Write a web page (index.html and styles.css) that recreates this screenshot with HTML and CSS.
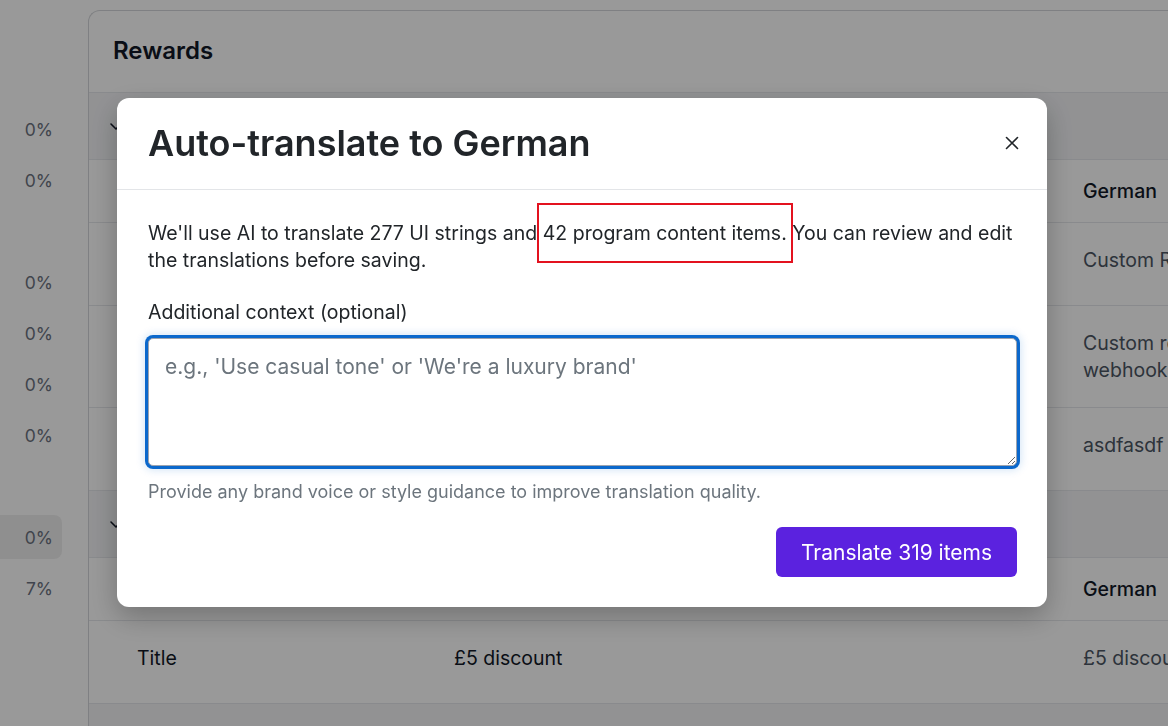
FILE: index.html
```html
<!DOCTYPE html>
<html lang="en">

<head>
    <meta charset="utf-8">
    <meta content="width=device-width, initial-scale=1.0" name="viewport">
    <title>Translations</title>
    <link rel="stylesheet" href="styles.css">
</head>

<body>

    <div class="page">
        <!-- Language progress list -->
        <aside class="langs">
            <div class="lang">0%</div>
            <div class="lang">0%</div>
            <div class="lang"></div>
            <div class="lang">0%</div>
            <div class="lang">0%</div>
            <div class="lang">0%</div>
            <div class="lang">0%</div>
            <div class="lang"></div>
            <div class="lang active">0%</div>
            <div class="lang">7%</div>
        </aside>

        <main class="content">
            <div class="card">
                <div class="card-head">
                    <h2>Rewards</h2>
                </div>

                <div class="section-head">
                    <svg class="chevron" viewBox="0 0 16 16" width="16" height="16">
                        <path d="M3 6l5 5 5-5" fill="none" stroke="#111827" stroke-width="1.6" stroke-linecap="round" stroke-linejoin="round" />
                    </svg>
                    <span>Custom reward</span>
                </div>
                <div class="row row-head">
                    <div>Field</div>
                    <div>English</div>
                    <div>German</div>
                </div>
                <div class="row">
                    <div>Name</div>
                    <div>Custom Reward</div>
                    <div class="muted">Custom Reward</div>
                </div>
                <div class="row tall">
                    <div>Description</div>
                    <div>Custom reward via webhook</div>
                    <div class="muted">Custom reward via webhook</div>
                </div>
                <div class="row">
                    <div>Terms</div>
                    <div>asdfasdf</div>
                    <div class="muted">asdfasdf</div>
                </div>

                <div class="section-head">
                    <svg class="chevron" viewBox="0 0 16 16" width="16" height="16">
                        <path d="M3 6l5 5 5-5" fill="none" stroke="#111827" stroke-width="1.6" stroke-linecap="round" stroke-linejoin="round" />
                    </svg>
                    <span>£5 discount</span>
                </div>
                <div class="row row-head">
                    <div>Field</div>
                    <div>English</div>
                    <div>German</div>
                </div>
                <div class="row">
                    <div>Title</div>
                    <div>£5 discount</div>
                    <div class="muted">£5 discount</div>
                </div>

                <div class="section-head"></div>
            </div>
        </main>
    </div>

    <!-- Auto-translate dialog -->
    <div class="overlay">
        <div class="modal">
            <div class="modal-head">
                <h1>Auto-translate to German</h1>
                <button class="close" aria-label="Close">
                    <svg viewBox="0 0 14 14" width="14" height="14">
                        <path d="M1.5 1.5l11 11M12.5 1.5l-11 11" stroke="#212529" stroke-width="1.6" stroke-linecap="round" />
                    </svg>
                </button>
            </div>
            <div class="modal-body">
                <p>We'll use AI to translate 277 UI strings and <span class="mark">42 program content items.</span> You can review and edit the translations before saving.</p>
                <label for="context">Additional context (optional)</label>
                <textarea id="context" placeholder="e.g., 'Use casual tone' or 'We're a luxury brand'"></textarea>
                <div class="hint">Provide any brand voice or style guidance to improve translation quality.</div>
                <div class="actions">
                    <button class="primary">Translate 319 items</button>
                </div>
            </div>
        </div>
    </div>

</body>

</html>
```

FILE: styles.css
```css
body {
    font-family: Inter, "Noto Sans", sans-serif;
    margin: 0;
    padding: 0;
    background: #fff;
    color: #111827;
    overflow: hidden;
    height: 726px;
}

.page {
    display: flex;
}

/* left column with translation progress */
.langs {
    width: 88px;
    flex-shrink: 0;
    padding-top: 107px;
}

.lang {
    width: 62px;
    height: 44px;
    margin-bottom: 7px;
    box-sizing: border-box;
    padding-right: 9px;
    display: flex;
    align-items: center;
    justify-content: flex-end;
    font-size: 17.5px;
    color: #6b7280;
    border-radius: 0 8px 8px 0;
}

.lang.active {
    background: #efefef;
}

.content {
    flex: 1;
    padding-top: 10px;
    min-width: 0;
}

.card {
    border: 1px solid #d4d6da;
    border-right: none;
    border-radius: 12px 0 0 0;
    background: #fff;
}

.card-head {
    height: 81px;
    display: flex;
    align-items: center;
    padding-left: 24px;
    border-bottom: 1px solid #e5e7eb;
}

.card-head h2 {
    margin: 0 0 2px;
    font-size: 24px;
    font-weight: 600;
}

.section-head {
    height: 66px;
    display: flex;
    align-items: center;
    gap: 10px;
    padding-left: 19px;
    background: #f3f4f6;
    font-size: 19.5px;
    font-weight: 600;
}

.row {
    display: grid;
    grid-template-columns: 317px 629px 230px;
    align-items: start;
    height: 83px;
    box-sizing: border-box;
    padding: 24px 0 0 48px;
    border-bottom: 1px solid #e5e7eb;
    font-size: 19.5px;
    line-height: 27px;
}

.row-head {
    height: 64px;
    padding-top: 0;
    align-items: center;
    font-weight: 500;
    border-top: 1px solid #e5e7eb;
}

.row.tall {
    height: 102px;
}

.muted {
    color: #4b5563;
}

.overlay {
    position: fixed;
    top: 0;
    left: 0;
    width: 100%;
    height: 100%;
    background-color: rgba(0, 0, 0, 0.4);
    display: flex;
    justify-content: center;
    align-items: flex-start;
    padding: 98px 4px 0 0;
    box-sizing: border-box;
}

.modal {
    width: 930px;
    background: #fff;
    border-radius: 12px;
    box-shadow: 0 10px 28px rgba(0, 0, 0, 0.25);
    color: #212529;
}

.modal-head {
    height: 92px;
    box-sizing: border-box;
    display: flex;
    align-items: center;
    justify-content: space-between;
    padding: 0 24px 2px 31px;
    border-bottom: 1px solid #e3e5e8;
}

.modal-head h1 {
    margin: 0;
    font-size: 36px;
    font-weight: 600;
}

.close {
    border: none;
    background: none;
    padding: 4px;
    display: flex;
}

.modal-body {
    padding: 30px 30px 30px 31px;
    display: flex;
    flex-direction: column;
}

.modal-body p {
    margin: 0 0 25px;
    font-size: 19.5px;
    line-height: 27px;
}

.mark {
    position: relative;
}

.mark::after {
    content: "";
    position: absolute;
    left: -6px;
    right: -6px;
    top: -18px;
    bottom: -18px;
    border: 2px solid #e3121f;
}

label {
    font-size: 19.5px;
    line-height: 27px;
    margin-bottom: 12px;
}

textarea {
    height: 128px;
    box-sizing: border-box;
    resize: vertical;
    font-family: inherit;
    font-size: 21px;
    padding: 15px 16px;
    border: 1px solid #9ca3af;
    border-radius: 5px;
    outline: none;
    box-shadow: 0 0 0 3px #0b68cc, 0 0 8px 4px rgba(11, 104, 204, 0.18);
    color: #212529;
}

textarea::placeholder {
    color: #6c757d;
}

.hint {
    margin-top: 14px;
    font-size: 18px;
    line-height: 24px;
    color: #6c757d;
}

.actions {
    display: flex;
    justify-content: flex-end;
    margin-top: 23px;
}

.primary {
    width: 241px;
    height: 50px;
    border: none;
    border-radius: 6px;
    background: #5b22df;
    color: #fff;
    font-family: inherit;
    font-size: 21px;
}
```
